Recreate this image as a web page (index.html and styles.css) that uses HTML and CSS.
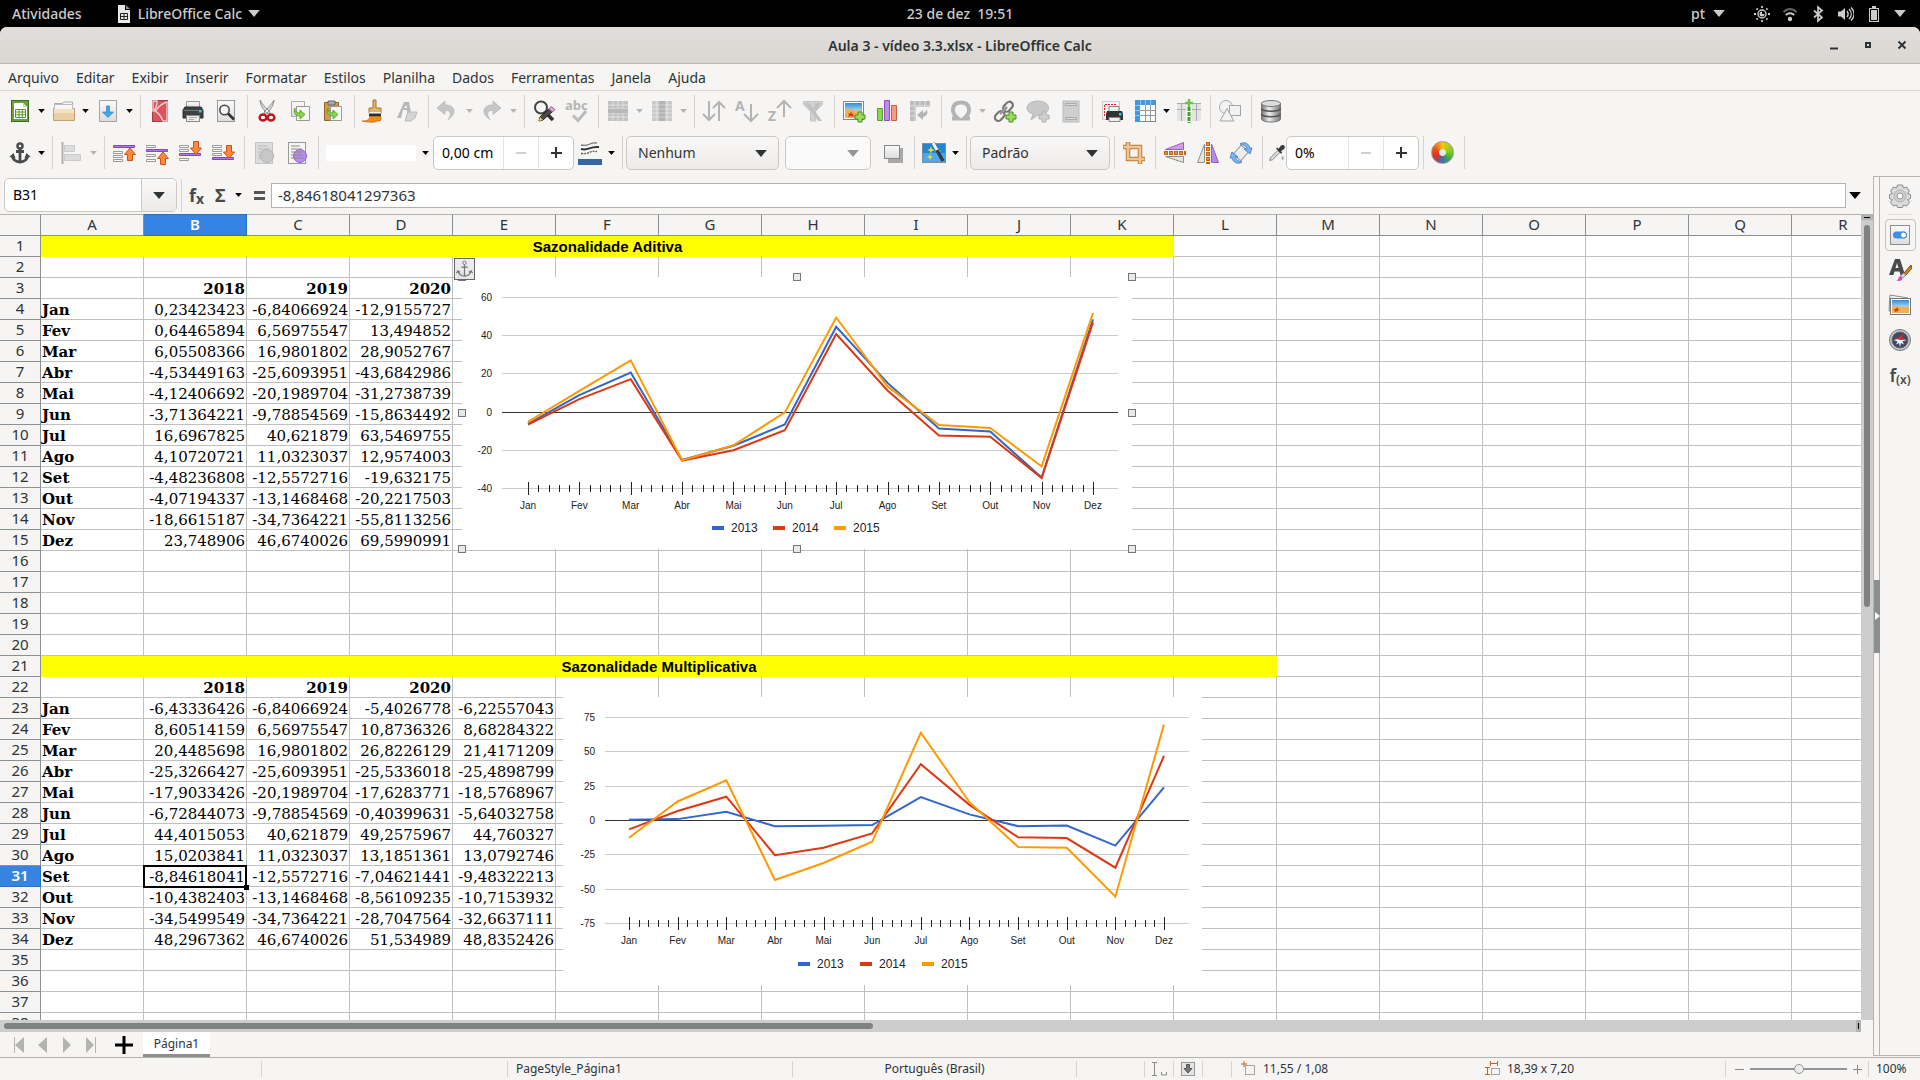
FILE: index.html
```html
<!DOCTYPE html>
<html lang="pt-BR">
<head>
<meta charset="utf-8">
<title>Aula 3 - vídeo 3.3.xlsx - LibreOffice Calc</title>
<link rel="stylesheet" href="styles.css">
</head>
<body>
<svg class="sprite" aria-hidden="true">
  <defs>
    <linearGradient id="paper" x1="0" y1="0" x2="0" y2="1"><stop offset="0" stop-color="#fafafa"/><stop offset="1" stop-color="#dcdcdc"/></linearGradient>
    <linearGradient id="sky" x1="0" y1="0" x2="0" y2="1"><stop offset="0" stop-color="#2f8fd8"/><stop offset="1" stop-color="#b8e2fa"/></linearGradient>
    <linearGradient id="metal" x1="0" y1="0" x2="1" y2="0"><stop offset="0" stop-color="#777"/><stop offset=".4" stop-color="#eee"/><stop offset="1" stop-color="#777"/></linearGradient>
  </defs>
  <symbol id="calc" viewBox="0 0 24 24"><rect x="3.500" y="1.500" width="17" height="21" fill="#6aa13f" stroke="#3d6b1e"/><path d="M6 4h9l4 4v12H6z" fill="#fff"/><path d="M15 4v4h4z" fill="#c9dcb9"/><path d="M7.500 10.500h10v8h-10zM7.500 13h10M7.500 15.800h10M11 10.500v8M14.300 10.500v8" fill="none" stroke="#5b9433"/></symbol>
  <symbol id="folder" viewBox="0 0 24 24"><path d="M2.500 20V4.500H10l2-1.500h8.500v4z" fill="#f4f4f4" stroke="#aaa"/><path d="M1.500 9.500h21v12h-21z" fill="#e9cfa2" stroke="#c2a370"/><path d="M2.500 5.500h18v5h-18z" fill="#f6f6f6" stroke="#bbb"/><path d="M2 10h20v4H2z" fill="#f3e3c5"/></symbol>
  <symbol id="save" viewBox="0 0 24 24"><rect x="3.500" y="1.500" width="17" height="21" fill="url(#paper)" stroke="#a5a5a5"/><path d="M10.500 7h3v6h4L12 18.500 6.500 13h4z" fill="#45a5e8" stroke="#2b82c2" stroke-width=".7"/></symbol>
  <symbol id="pdf" viewBox="0 0 24 24"><rect x="4.500" y="1.500" width="15" height="21" fill="#d9545c" stroke="#9c4048"/><path d="M5 2h4c0 5-1 8-4 10zM19 3c-7 2-9 6-12 9 4 2 6 5 8 10h4z" fill="#d9545c" stroke="#f7c9cb" stroke-width="1.400"/></symbol>
  <symbol id="print" viewBox="0 0 24 24"><path d="M5.500 2.500h13v7h-13z" fill="url(#paper)" stroke="#999"/><path d="M4 8h16l2 3v8H2v-8z" fill="#3e4142" stroke="#2a2c2d"/><path d="M2.500 11.500h19" stroke="#777"/><rect x="18" y="11" width="2.500" height="2.500" fill="#1fd0ff"/><path d="M5.500 16.500h13v6h-13z" fill="#efefef" stroke="#888"/><path d="M8 18.500h8M8 20.500h5" stroke="#aaa"/></symbol>
  <symbol id="preview" viewBox="0 0 24 24"><rect x="3.500" y="1.500" width="17" height="21" fill="url(#paper)" stroke="#999"/><circle cx="10.500" cy="11" r="4.700" fill="#f5f5f5" stroke="#4a4a4a" stroke-width="1.600"/><path d="M14 14.500l6 6" stroke="#333" stroke-width="2.600"/></symbol>
  <symbol id="cut" viewBox="0 0 24 24"><path d="M5 1c0 5 4 11 9 15l1-3C11 9 7 5 5 1zM19 1c0 5-4 11-9 15l-1-3c4-4 8-8 10-12z" fill="#ddd" stroke="#777" stroke-width=".8"/><ellipse cx="8" cy="18.500" rx="3.400" ry="3" fill="none" stroke="#c4151c" stroke-width="2.400"/><ellipse cx="16" cy="18.500" rx="3.400" ry="3" fill="none" stroke="#c4151c" stroke-width="2.400"/></symbol>
  <symbol id="copy" viewBox="0 0 24 24"><path d="M3.500 2.500h13v15h-13z" fill="url(#paper)" stroke="#aaa"/><path d="M8.500 7.500h13v14h-13z" fill="#f8f8f8" stroke="#999"/><path d="M7 9c0 4 2 5 5 5v-3l5 4.500-5 4.500v-3c-5 0-7-4-5-8z" fill="#8ad54a" stroke="#4e9a1c" stroke-width=".8"/></symbol>
  <symbol id="paste" viewBox="0 0 24 24"><path d="M3.500 3.500h14v18h-14z" fill="#d29a4e" stroke="#936424"/><path d="M7 2h7v4H7z" fill="#aaa" stroke="#666"/><path d="M9.500 7.500h11v14h-11z" fill="#f8f8f8" stroke="#999"/><path d="M7 9c0 4 2 5 5 5v-3l5 4.500-5 4.500v-3c-5 0-7-4-5-8z" fill="#8ad54a" stroke="#4e9a1c" stroke-width=".8"/></symbol>
  <symbol id="brush" viewBox="0 0 24 24"><path d="M11 1h3v8h5v5H7V9h4z" fill="#e6b566" stroke="#a87328"/><path d="M7 13.500h12v4H7z" fill="#2d2d2d"/><path d="M7 12.500h12v2H7z" fill="#f4f4f4" stroke="#999" stroke-width=".5"/><path d="M8 17.500h11v3c0 2-3 1-5 2s-7 1-14-.5c5 0 7-1 8-4.500z" fill="#f08c1e" stroke="#bf6407" stroke-width=".7"/></symbol>
  <symbol id="clear" viewBox="0 0 24 24"><path d="M2 19L9 3h5l2 11h-4v-3H8l-2 8zM9 9h3l-.500-3z" fill="#b8b8b8" fill-rule="evenodd"/><path d="M13 13h9l-2 6-4 3h-6z" fill="#d4d4d4" stroke="#bcbcbc"/></symbol>
  <symbol id="undo" viewBox="0 0 24 24"><path d="M9 2L1 9l8 6.500v-4c6-.5 7 4 3 9 9-5 8-15-3-14.500z" fill="#c6c6c6" stroke="#b4b4b4" stroke-width=".7"/></symbol>
  <symbol id="redo" viewBox="0 0 24 24"><path d="M13 2l8 7-8 6.500v-4c-6-.5-7 4-3 9-9-5-8-15 3-14.500z" fill="#c6c6c6" stroke="#b4b4b4" stroke-width=".7"/></symbol>
  <symbol id="find" viewBox="0 0 24 24"><circle cx="9" cy="8.500" r="6" fill="#f5f5f5" stroke="#444" stroke-width="2"/><path d="M13 13l8 8" stroke="#333" stroke-width="3.500"/><path d="M7 22l1-4L18 9l3 3-10 9z" fill="#4a4a4a" stroke="#222"/><path d="M17 10l2-2.500 4 3-2.500 2.500z" fill="#e6a4d8" stroke="#9c6290"/><path d="M7 22l1-4 3 3z" fill="#f2d33a"/></symbol>
  <symbol id="rows" viewBox="0 0 24 24"><rect x="2" y="2" width="20" height="20" fill="#c2c2c2"/><path d="M7 2v20M12 2v20M17 2v20M2 6h20M2 10h20M2 14h20M2 18h20" stroke="#e0e0e0"/><path d="M2 10h20v4H2z" fill="#b8b8b8"/></symbol>
  <symbol id="cols" viewBox="0 0 24 24"><rect x="2" y="2" width="20" height="20" fill="#cacaca"/><path d="M7 2v20M12 2v20M17 2v20M2 6h20M2 10h20M2 14h20M2 18h20" stroke="#e4e4e4"/><path d="M9 2h6v20H9z" fill="#b4b4b4"/><path d="M9 6h6M9 10h6M9 14h6M9 18h6" stroke="#d0d0d0"/></symbol>
  <symbol id="sort" viewBox="0 0 24 24"><path d="M7 2v19M1 15l6 6 6-6M17 22V3M11 9l6-6 6 6" fill="none" stroke="#b4b4b4" stroke-width="2"/></symbol>
  <symbol id="filter" viewBox="0 0 24 24"><path d="M2.500 2.500h19v3l-7 7V22h-5v-9.500l-7-7z" fill="#d2d2d2" stroke="#c4c4c4"/><path d="M4 4h4l13 18h-4zM20 4h-5l-3 5 3 3z" fill="#c0c0c0"/></symbol>
  <symbol id="image" viewBox="0 0 24 24"><rect x="1.500" y="2.500" width="20" height="18" fill="#fff" stroke="#888"/><path d="M3 4h17v9H3z" fill="url(#sky)"/><path d="M3 11c5-3 8 2 17 0v8H3z" fill="#f0b254"/><path d="M6 14l2 1 1-3 1 3 2-1-1 2 1 2-3-1-3 1 1-2z" fill="#e3350d"/><path d="M16 13h4v3h3v4h-3v3h-4v-3h-3v-4h3z" fill="#9bdc5a" stroke="#4a8d22"/></symbol>
  <symbol id="chart" viewBox="0 0 24 24"><path d="M2.500 9.500h5v12h-5z" fill="#8bd655" stroke="#5b9d2f"/><path d="M9.500 1.500h5v20h-5z" fill="#c489ec" stroke="#8c4fb8"/><path d="M16.500 6.500h5v15h-5z" fill="#ef9b85" stroke="#c0614a"/></symbol>
  <symbol id="pivot" viewBox="0 0 24 24"><path d="M2 2h20v6H8v14H2z" fill="#bdbdbd"/><path d="M2 7h20M7 2v20M12 2v6M17 2v6M2 12h6M2 17h6" stroke="#dedede"/><path d="M18 10c3 4 1 7-3 8v3l-6-5 6-5v3c3-1 3-2 3-4z" fill="#b4b4b4"/></symbol>
  <symbol id="omega" viewBox="0 0 24 24"><path d="M3 19.500h6C1 13 3 3.500 12 3.500S23 13 15 19.500h6" fill="none" stroke="#b4b4b4" stroke-width="4"/></symbol>
  <symbol id="link" viewBox="0 0 24 24"><g fill="none" stroke="#777" stroke-width="2.200"><rect x="12" y="2" width="7" height="11" rx="3.500" transform="rotate(42 15 7)"/><rect x="3" y="11" width="7" height="11" rx="3.500" transform="rotate(42 6 17)"/></g><path d="M7 15l7-7" stroke="#999" stroke-width="2.500"/><path d="M16 13h4v3h3v4h-3v3h-4v-3h-3v-4h3z" fill="#9bdc5a" stroke="#4a8d22"/></symbol>
  <symbol id="comment" viewBox="0 0 24 24"><path d="M12 2c14 0 14 14 0 14l-7 5 2-6C-3 12 0 2 12 2z" fill="#c8c8c8" stroke="#b8b8b8"/><path d="M16 13h4v3h3v4h-3v3h-4v-3h-3v-4h3z" fill="#d0d0d0" stroke="#b0b0b0"/></symbol>
  <symbol id="headfoot" viewBox="0 0 24 24"><rect x="4" y="2" width="16" height="21" fill="#cfcfcf" stroke="#bcbcbc"/><path d="M6.500 4.500h11v2h-11zM6.500 18.500h11v2h-11z" fill="#dadada" stroke="#aaa"/></symbol>
  <symbol id="printarea" viewBox="0 0 24 24"><path d="M2.500 2.500h17v18h-17z" fill="#f4f4f4" stroke="#ccc"/><path d="M4.500 17V5.500H17" fill="none" stroke="#e3242b" stroke-dasharray="2 1"/><path d="M9 7.500h10v5H9z" fill="#eee" stroke="#888"/><path d="M7 12h15l1 3v6H6v-6z" fill="#333"/><rect x="19" y="14" width="2.500" height="2.500" fill="#1fd0ff"/><path d="M9 18.500h11v4H9z" fill="#eee" stroke="#888"/></symbol>
  <symbol id="freeze" viewBox="0 0 24 24"><rect x="2.500" y="1.500" width="20" height="21" fill="#fafafa" stroke="#888"/><path d="M12.500 6v16M17.500 6v16M7 11.500h15M7 16.500h15" stroke="#999"/><path d="M2 1h21v5H7v17H2z" fill="#3d9be3"/><path d="M2 6.500h5M2 11.500h5M2 16.500h5M7.500 1v5M12.500 1v5M17.500 1v5" stroke="#8cc8f2"/></symbol>
  <symbol id="split" viewBox="0 0 24 24"><path d="M0 4h9v18H0zM15 4h9v18h-9z" fill="#e4e4e4"/><path d="M0 4.500h9M15 4.500h9M0 10.500h9M15 10.500h9M4.500 5v17M19.500 5v17" stroke="#aaa"/><path d="M12 8v16" stroke="#43a52c" stroke-width="3" stroke-dasharray="4 1"/><path d="M12 0v8M8 4h8" stroke="#6cc644" stroke-width="2.400"/></symbol>
  <symbol id="shapes" viewBox="0 0 24 24"><circle cx="8" cy="8" r="6.500" fill="#f2f2f2" stroke="#a8a8a8"/><rect x="11.500" y="6.500" width="11" height="10" fill="#f2f2f2" stroke="#a4a4a4"/><path d="M9 9.500l7 12.500H2z" fill="#f2f2f2" stroke="#a4a4a4"/></symbol>
  <symbol id="database" viewBox="0 0 24 24"><path d="M2.500 4v16c0 4 19 4 19 0V4z" fill="url(#metal)" stroke="#777"/><ellipse cx="12" cy="4.500" rx="9.500" ry="3" fill="#ddd" stroke="#777"/><path d="M2.500 9.500c1 3.500 18 3.500 19 0M2.500 15c1 3.500 18 3.500 19 0" fill="none" stroke="#555" stroke-width="1.500"/></symbol>
  <symbol id="anchor" viewBox="0 0 24 24"><circle cx="12" cy="5" r="2.500" fill="none" stroke="#4a4a4a" stroke-width="2.500"/><path d="M12 7v14M8 10.500h8M4 14c1 5 4 7 8 7s7-2 8-7" fill="none" stroke="#4a4a4a" stroke-width="2.800"/><path d="M1.500 16l4-4 2 5zM22.500 16l-4-4-2 5z" fill="#4a4a4a"/></symbol>
  <symbol id="align" viewBox="0 0 24 24"><path d="M2.500 1v22" stroke="#b0b0b0" stroke-width="2"/><path d="M4.500 4.500h10v6h-10zM4.500 13.500h16v6h-16z" fill="#dcdcdc" stroke="#cacaca"/></symbol>
  <symbol id="tofront" viewBox="0 0 24 24"><path d="M1.500 10.500h9v2h-9zM1.500 14.500h9v2h-9zM1.500 18.500h9v2h-9z" fill="#fff" stroke="#999"/><path d="M1.500 4.500h21v2h-21z" fill="#b07ae6" stroke="#8347c4"/><path d="M18 7l5.500 6.500h-3v6h-5v-6h-3z" fill="#fb8a3c" stroke="#cf5314"/></symbol>
  <symbol id="forward" viewBox="0 0 24 24"><path d="M1.500 4.500h9v2h-9zM1.500 13.500h9v2h-9zM1.500 18.500h9v2h-9z" fill="#fff" stroke="#999"/><path d="M1.500 8.500h21v2h-21z" fill="#b07ae6" stroke="#8347c4"/><path d="M18 11l5.500 6.500h-3v6h-5v-6h-3z" fill="#fb8a3c" stroke="#cf5314"/></symbol>
  <symbol id="back" viewBox="0 0 24 24"><path d="M1.500 4.500h9v2h-9zM1.500 8.500h9v2h-9zM1.500 17.500h9v2h-9z" fill="#fff" stroke="#999"/><path d="M1.500 12.500h21v2h-21z" fill="#b07ae6" stroke="#8347c4"/><path d="M18 13.500L12.500 7h3V.500h5V7h3z" fill="#fb8a3c" stroke="#cf5314"/></symbol>
  <symbol id="toback" viewBox="0 0 24 24"><path d="M1.500 4.500h9v2h-9zM1.500 8.500h9v2h-9zM1.500 12.500h9v2h-9z" fill="#fff" stroke="#999"/><path d="M1.500 16.500h21v2h-21z" fill="#b07ae6" stroke="#8347c4"/><path d="M18 17.500L12.500 11h3V4.500h5V11h3z" fill="#fb8a3c" stroke="#cf5314"/></symbol>
  <symbol id="fore" viewBox="0 0 24 24"><rect x="3.500" y="1.500" width="17" height="21" fill="#dcdcdc" stroke="#c4c4c4"/><path d="M6 5h9M6 8h11M6 11h11M6 14h4M6 17h3" stroke="#b8b8b8"/><circle cx="15" cy="15" r="6.500" fill="#c8c8c8" stroke="#b4b4b4"/></symbol>
  <symbol id="backg" viewBox="0 0 24 24"><rect x="3.500" y="1.500" width="17" height="21" fill="#f6f6f6" stroke="#999"/><circle cx="15" cy="15" r="6.500" fill="#b98af0" stroke="#9560d8"/><path d="M6 5h9M6 8h11M6 11h11M6 14h12M6 17h13" stroke="#8a8a8a"/></symbol>
  <symbol id="linestyle" viewBox="0 0 24 24"><path d="M3 4c8 2 8-3 16-2" fill="none" stroke="#777" stroke-width="1.300"/><path d="M3 8c8 2 8-3 18-2" fill="none" stroke="#333" stroke-width="2"/><path d="M3 12.500c8 1 8-3 16-2" fill="none" stroke="#555" stroke-width="1.300" stroke-dasharray="2 1"/><path d="M0 18h24v6H0z" fill="#3465a4"/></symbol>
  <symbol id="shadow" viewBox="0 0 24 24"><path d="M7 7h15v15H7z" fill="#a8a8a8"/><rect x="3.500" y="4.500" width="15" height="13" fill="url(#paper)" stroke="#888"/></symbol>
  <symbol id="wand" viewBox="0 0 24 24"><rect x=".500" y="2.500" width="23" height="19" fill="#1f86d8" stroke="#8a8a8a"/><path d="M1 12h22v9H1z" fill="#47a9ee"/><path d="M9 5l1 3 3 1-3 1-1 3-1-3-3-1 3-1zM16 7l1 2 2 1-2 1-1 2-1-2-2-1 2-1zM8 13l1 2 2 1-2 1-1 2-1-2-2-1 2-1z" fill="#f4d13a"/><path d="M11 2l10 18" stroke="#3a3a3a" stroke-width="3.500"/><path d="M11 2l4 7" stroke="#f4f4f4" stroke-width="3"/></symbol>
  <symbol id="crop" viewBox="0 0 24 24"><path d="M6 1v17h17M1 6h17v17" fill="none" stroke="#bb7a32" stroke-width="4.500"/><path d="M6 1.500v16.500h16.500M1.500 6h16.500v16.500" fill="none" stroke="#f0c592" stroke-width="2.600"/></symbol>
  <symbol id="flipv" viewBox="0 0 24 24"><path d="M20.500 1.500v7h-18z" fill="#c9a0f0" stroke="#9060c8"/><path d="M2.500 15.500h18v6z" fill="#e2e6df" stroke="#8c928a"/><path d="M1 12h22" stroke="#d4610a" stroke-width="4" stroke-dasharray="4 1"/><path d="M2 12h20" stroke="#fbb56c" stroke-dasharray="2 3"/></symbol>
  <symbol id="fliph" viewBox="0 0 24 24"><path d="M15.500 3l7 18.500h-7z" fill="#b98aea" stroke="#9060c8"/><path d="M8.500 3v18.500h-7z" fill="#e2e6df" stroke="#8c928a"/><path d="M12 1v22" stroke="#d4610a" stroke-width="4" stroke-dasharray="4 1"/><path d="M12 2v20" stroke="#fbb56c" stroke-dasharray="2 3"/></symbol>
  <symbol id="rotate" viewBox="0 0 24 24"><rect x="7" y="6" width="10" height="12" fill="#eee" stroke="#999" transform="rotate(40 12 12)"/><path d="M11 3c5-3 9 0 10 4h2l-2 6-6-5h3c-1-3-3-4-7-5zM13 21c-5 3-9 0-10-4H1l2-6 6 5H6c1 3 3 4 7 5z" fill="#7db4ee" stroke="#3f78c0" stroke-width=".8"/></symbol>
  <symbol id="dropper" viewBox="0 0 24 24"><path d="M5 18L14 9l2.500 2.500L8 20l-3.500 1z" fill="#ddd" stroke="#777"/><path d="M12 7l1.500-1.500L15 7l3-4c3-2 6 1 4 4l-4 3 1.500 1.500L18 13z" fill="#3b3b3b"/><path d="M20 16c3 5-3 5 0 0z" fill="#bbb" stroke="#999"/></symbol>
  <symbol id="gear" viewBox="0 0 24 24"><path d="M9.500 1h5l1 3 3-1 3 4-2 2.500 3 1v4l-3 1 2 3-3 3.500-3-1-1 2.500h-5l-1-2.500-3 1-3-3.500 2-3-3-1v-4l3-1L2.500 7l3-4 3 1z" fill="#dcdcdc" stroke="#8a8a8a"/><circle cx="12" cy="12" r="6" fill="#cecece" stroke="#b0b0b0"/><circle cx="12" cy="12" r="3" fill="#f6f5f4" stroke="#999"/></symbol>
  <symbol id="props" viewBox="0 0 24 24"><rect x="2.500" y="2.500" width="19" height="19" fill="url(#paper)" stroke="#8e8e8e"/><rect x="5" y="8.500" width="14" height="7" rx="3.500" fill="#3c8fe8"/><circle cx="15.500" cy="12" r="3" fill="#fff" stroke="#4a80b8"/></symbol>
  <symbol id="styles" viewBox="0 0 24 24"><path d="M1 17L7 1h5l5 16h-4.500l-1-3.500h-5L5.500 17zM7.500 10h3L9 5z" fill="#4a4a4a" fill-rule="evenodd"/><path d="M23 7l-7 8 2 2 6-7z" fill="#c98728" stroke="#7a4b0d"/><path d="M15.500 15l-3 3 2 2 3.500-3z" fill="#ddd" stroke="#888"/><path d="M12.500 18c-2 0-2 4-4 5 3 0 6 0 6-3z" fill="#d849c8"/></symbol>
  <symbol id="gallery" viewBox="0 0 24 24"><path d="M2 2l18 3v15L1 18z" fill="#e8f4fb" stroke="#888"/><rect x="2.500" y="5.500" width="20" height="16" fill="#fff" stroke="#777"/><path d="M4 7h17v8H4z" fill="url(#sky)"/><path d="M4 14c5-3 9 2 17-1v7H4z" fill="#eeb052"/><path d="M6 16l2 0 1-2 1 2 2 0-2 1 0 2-1-1-2 1z" fill="#e3350d"/></symbol>
  <symbol id="compass" viewBox="0 0 24 24"><circle cx="12" cy="12" r="10.500" fill="#c9c9c9" stroke="#777"/><circle cx="12" cy="12" r="8" fill="#3d4a66" stroke="#666"/><path d="M12 9l1.500 2 5 1-4 1.500 1.500 3-3-1.500-1 4-1-4-3 1.500 1.500-3-4-1.500 5-1z" fill="#f4f4f4"/><path d="M15.500 5l-1 5 4 1.500-6.500.5-7-2.500 6 .5z" fill="#e2252a"/></symbol>
  <symbol id="down" viewBox="0 0 10 6"><path d="M0 0h10L5 6z" fill="currentColor"/></symbol>
</svg>

<div class="desktop">
  <header class="topbar">
    <div class="topbar-left">
      <button class="top-item" type="button">Atividades</button>
      <button class="top-item app-menu" type="button">
        <svg class="ic16" viewBox="0 0 16 18" aria-hidden="true"><path d="M2 0h7v5h5v13H2z" fill="#e8e8e8"/><path d="M10 0l4 4h-4z" fill="#888"/><path d="M4.500 8.500h7v6h-7zM4.500 11.500h7M8 8.500v6" fill="none" stroke="#222"/></svg>
        LibreOffice Calc
        <svg class="tri" aria-hidden="true"><use href="#down"/></svg>
      </button>
    </div>
    <time class="clock">23 de dez&nbsp; 19:51</time>
    <div class="topbar-right">
      <button class="top-item lang" type="button">pt <svg class="tri" aria-hidden="true"><use href="#down"/></svg></button>
      <button class="top-item tray" type="button" aria-label="Sistema">
        <svg class="ic16" viewBox="0 0 16 16"><circle cx="8" cy="8" r="4" fill="none" stroke="#ccc" stroke-width="1.400"/><path d="M8 5.500a2.500 2.500 0 1 0 2.500 2.500H8z" fill="#ccc"/><path d="M8 0v2M8 14v2M0 8h2M14 8h2M2.500 2.500l1.200 1.200M12.300 12.300l1.200 1.200M2.500 13.500l1.200-1.200M12.300 3.700l1.200-1.200" stroke="#ccc" stroke-width="1.800"/></svg>
        <svg class="ic16" viewBox="0 0 16 16"><path d="M1.500 6c4-4 9-4 13 0" fill="none" stroke="#666" stroke-width="2"/><path d="M3.800 9c3-2.500 5.400-2.500 8.400 0" fill="none" stroke="#ccc" stroke-width="2"/><circle cx="8" cy="13" r="2.200" fill="#ccc"/></svg>
        <svg class="ic16" viewBox="0 0 16 16"><path d="M4 4.500l8 7L8 15V1l4 3.500-8 7" fill="none" stroke="#ccc" stroke-width="1.700"/></svg>
        <svg class="ic16" viewBox="0 0 16 16"><path d="M0 5.500h3L7 2v12l-4-3.500H0z" fill="#ccc"/><path d="M9 5c1.500 2 1.500 4 0 6M11 3c3 3 3 7 0 10M13 1.500c4 4 4 9 0 13" fill="none" stroke="#ccc" stroke-width="1.400"/></svg>
        <svg class="ic16" viewBox="0 0 16 16"><path d="M6 0h4v2h3v14H3V2h3z" fill="#ccc"/><path d="M4.500 3.500h7v11h-7z" fill="none" stroke="#000"/></svg>
        <svg class="tri" aria-hidden="true"><use href="#down"/></svg>
      </button>
    </div>
  </header>

  <main class="window">
    <div class="titlebar">
      <h1>Aula 3 - vídeo 3.3.xlsx - LibreOffice Calc</h1>
      <div class="winbtns">
        <button type="button" aria-label="Minimizar"><svg viewBox="0 0 10 10"><path d="M1 8.500h8" stroke="#2e3436" stroke-width="2"/></svg></button>
        <button type="button" aria-label="Maximizar"><svg viewBox="0 0 10 10"><rect x="3" y="3" width="4" height="4" fill="none" stroke="#2e3436" stroke-width="2"/></svg></button>
        <button type="button" aria-label="Fechar"><svg viewBox="0 0 10 10"><path d="M1.500 1.500l7 7M8.500 1.500l-7 7" stroke="#2e3436" stroke-width="2"/></svg></button>
      </div>
    </div>
    <nav class="menubar">
      <button type="button">Arquivo</button><button type="button">Editar</button><button type="button">Exibir</button><button type="button">Inserir</button><button type="button">Formatar</button><button type="button">Estilos</button><button type="button">Planilha</button><button type="button">Dados</button><button type="button">Ferramentas</button><button type="button">Janela</button><button type="button">Ajuda</button>
    </nav>

    <div class="toolbar standard">
      <button class="tb split" type="button" aria-label="Novo"><svg><use href="#calc"/></svg><svg class="arr"><use href="#down"/></svg></button>
      <button class="tb split" type="button" aria-label="Abrir"><svg><use href="#folder"/></svg><svg class="arr"><use href="#down"/></svg></button>
      <button class="tb split" type="button" aria-label="Salvar"><svg><use href="#save"/></svg><svg class="arr"><use href="#down"/></svg></button>
      <span class="sep"></span>
      <button class="tb" type="button" aria-label="Exportar como PDF"><svg><use href="#pdf"/></svg></button>
      <button class="tb" type="button" aria-label="Imprimir"><svg><use href="#print"/></svg></button>
      <button class="tb" type="button" aria-label="Visualizar impressão"><svg><use href="#preview"/></svg></button>
      <span class="sep"></span>
      <button class="tb" type="button" aria-label="Cortar"><svg><use href="#cut"/></svg></button>
      <button class="tb" type="button" aria-label="Copiar"><svg><use href="#copy"/></svg></button>
      <button class="tb" type="button" aria-label="Colar"><svg><use href="#paste"/></svg></button>
      <span class="sep"></span>
      <button class="tb" type="button" aria-label="Clonar formatação"><svg><use href="#brush"/></svg></button>
      <button class="tb" type="button" aria-label="Limpar formatação"><svg><use href="#clear"/></svg></button>
      <span class="sep"></span>
      <button class="tb split off" type="button" aria-label="Desfazer"><svg><use href="#undo"/></svg><svg class="arr"><use href="#down"/></svg></button>
      <button class="tb split off" type="button" aria-label="Refazer"><svg><use href="#redo"/></svg><svg class="arr"><use href="#down"/></svg></button>
      <span class="sep"></span>
      <button class="tb" type="button" aria-label="Localizar e substituir"><svg><use href="#find"/></svg></button>
      <button class="tb" type="button" aria-label="Ortografia"><svg class="lettered" viewBox="0 0 24 24"><text class="abc" x="0" y="11">abc</text><path d="M8 16.500l5 5L21 12" fill="none" stroke="#bbb" stroke-width="3"/></svg></button>
      <span class="sep"></span>
      <button class="tb split off" type="button" aria-label="Linha"><svg><use href="#rows"/></svg><svg class="arr"><use href="#down"/></svg></button>
      <button class="tb split off" type="button" aria-label="Coluna"><svg><use href="#cols"/></svg><svg class="arr"><use href="#down"/></svg></button>
      <span class="sep"></span>
      <button class="tb" type="button" aria-label="Classificar"><svg><use href="#sort"/></svg></button>
      <button class="tb" type="button" aria-label="Ordem crescente"><svg class="lettered" viewBox="0 0 24 24"><text x="0" y="12">A</text><path d="M16 5v17M9 15l7 7 7-7" fill="none" stroke="#b4b4b4" stroke-width="2"/></svg></button>
      <button class="tb" type="button" aria-label="Ordem decrescente"><svg class="lettered" viewBox="0 0 24 24"><text x="0" y="22">Z</text><path d="M16 18V2M9 9l7-7 7 7" fill="none" stroke="#b4b4b4" stroke-width="2"/></svg></button>
      <button class="tb" type="button" aria-label="Autofiltro"><svg><use href="#filter"/></svg></button>
      <span class="sep"></span>
      <button class="tb" type="button" aria-label="Inserir imagem"><svg><use href="#image"/></svg></button>
      <button class="tb" type="button" aria-label="Inserir gráfico"><svg><use href="#chart"/></svg></button>
      <button class="tb" type="button" aria-label="Tabela dinâmica"><svg><use href="#pivot"/></svg></button>
      <span class="sep"></span>
      <button class="tb split off" type="button" aria-label="Caractere especial"><svg><use href="#omega"/></svg><svg class="arr"><use href="#down"/></svg></button>
      <button class="tb" type="button" aria-label="Hiperlink"><svg><use href="#link"/></svg></button>
      <button class="tb" type="button" aria-label="Anotação"><svg><use href="#comment"/></svg></button>
      <button class="tb" type="button" aria-label="Cabeçalhos e rodapés"><svg><use href="#headfoot"/></svg></button>
      <span class="sep"></span>
      <button class="tb" type="button" aria-label="Intervalo de impressão"><svg><use href="#printarea"/></svg></button>
      <button class="tb split" type="button" aria-label="Congelar"><svg><use href="#freeze"/></svg><svg class="arr"><use href="#down"/></svg></button>
      <button class="tb" type="button" aria-label="Dividir janela"><svg><use href="#split"/></svg></button>
      <span class="sep"></span>
      <button class="tb" type="button" aria-label="Funções de desenho"><svg><use href="#shapes"/></svg></button>
      <span class="sep"></span>
      <button class="tb" type="button" aria-label="Fontes de dados"><svg><use href="#database"/></svg></button>
    </div>

    <div class="toolbar object">
      <button class="tb split" type="button" aria-label="Âncora"><svg><use href="#anchor"/></svg><svg class="arr"><use href="#down"/></svg></button>
      <span class="sep"></span>
      <button class="tb split off" type="button" aria-label="Alinhar"><svg><use href="#align"/></svg><svg class="arr"><use href="#down"/></svg></button>
      <span class="sep"></span>
      <button class="tb" type="button" aria-label="Trazer para a frente"><svg><use href="#tofront"/></svg></button>
      <button class="tb" type="button" aria-label="Avançar um"><svg><use href="#forward"/></svg></button>
      <button class="tb" type="button" aria-label="Recuar um"><svg><use href="#back"/></svg></button>
      <button class="tb" type="button" aria-label="Enviar para trás"><svg><use href="#toback"/></svg></button>
      <span class="sep"></span>
      <button class="tb" type="button" aria-label="Para o primeiro plano"><svg><use href="#fore"/></svg></button>
      <button class="tb" type="button" aria-label="Para o plano de fundo"><svg><use href="#backg"/></svg></button>
      <span class="sep"></span>
      <button class="linebox" type="button" aria-label="Estilo de linha"><span></span><svg class="arr"><use href="#down"/></svg></button>
      <div class="spin wide"><input aria-label="Largura da linha" value="0,00 cm"><button class="minus" type="button" aria-label="Diminuir"></button><button class="plus" type="button" aria-label="Aumentar"></button></div>
      <button class="tb split" type="button" aria-label="Cor da linha"><svg><use href="#linestyle"/></svg><svg class="arr"><use href="#down"/></svg></button>
      <span class="sep"></span>
      <span class="combo fill"><select aria-label="Preenchimento"><option>Nenhum</option></select><svg><use href="#down"/></svg></span>
      <span class="combo empty"><select aria-label="Cor de preenchimento" disabled><option></option></select><svg><use href="#down"/></svg></span>
      <button class="tb" type="button" aria-label="Sombra"><svg><use href="#shadow"/></svg></button>
      <span class="sep"></span>
      <button class="tb split" type="button" aria-label="Filtro"><svg><use href="#wand"/></svg><svg class="arr"><use href="#down"/></svg></button>
      <span class="sep"></span>
      <span class="combo mode"><select aria-label="Modo da imagem"><option>Padrão</option></select><svg><use href="#down"/></svg></span>
      <span class="sep"></span>
      <button class="tb" type="button" aria-label="Cortar imagem"><svg><use href="#crop"/></svg></button>
      <span class="sep"></span>
      <button class="tb" type="button" aria-label="Inverter na vertical"><svg><use href="#flipv"/></svg></button>
      <button class="tb" type="button" aria-label="Inverter na horizontal"><svg><use href="#fliph"/></svg></button>
      <button class="tb" type="button" aria-label="Girar"><svg><use href="#rotate"/></svg></button>
      <span class="sep"></span>
      <svg class="dropper" aria-hidden="true"><use href="#dropper"/></svg>
      <div class="spin"><input aria-label="Transparência" value="0%"><button class="minus" type="button" aria-label="Diminuir"></button><button class="plus" type="button" aria-label="Aumentar"></button></div>
      <span class="sep"></span>
      <button class="tb" type="button" aria-label="Cor"><span class="wheel"></span></button>
      <span class="sep"></span>
    </div>

    <div class="workarea">
      <section class="document">
        <div class="formulabar">
          <div class="namebox"><input aria-label="Caixa de nome" value="B31"><button type="button" aria-label="Lista de nomes"><svg><use href="#down"/></svg></button></div>
          <span class="sep"></span>
          <button class="fx" type="button" aria-label="Assistente de funções">f<sub>x</sub></button>
          <button class="sigma" type="button" aria-label="Soma">Σ <svg class="arr"><use href="#down"/></svg></button>
          <button class="equals" type="button" aria-label="Fórmula"></button>
          <input class="formula" aria-label="Linha de entrada" value="-8,84618041297363">
          <button class="expand" type="button" aria-label="Expandir"><svg><use href="#down"/></svg></button>
        </div>
        <div class="gridrow">
          <div class="sheet">
            <table class="cells"><thead></thead><tbody></tbody></table>
            <div class="cursor"><i></i></div>
            <figure class="plot additive" data-plot="additive"></figure>
            <figure class="plot multiplicative" data-plot="multiplicative"></figure>
            <div class="handles"><i></i><i></i><i></i><i></i><b></b><i></i><i></i><i></i><i></i></div>
            <div class="anchor-badge"><svg viewBox="0 0 20 20"><circle cx="10" cy="3.500" r="1.800" fill="none" stroke="#777"/><path d="M10 5.500v12M6.500 8h7M3 12c1 4 4 5.500 7 5.500s6-1.500 7-5.500M1.500 14.500L3 12l2.500 1.500M18.500 14.500L17 12l-2.500 1.500" fill="none" stroke="#777" stroke-width="1.300"/></svg></div>
          </div>
          <div class="vscroll"><span class="grip"></span><span class="thumb"></span></div>
        </div>
        <div class="hscroll"><span class="thumb"></span><span class="grip"></span></div>
        <div class="tabs">
          <button type="button" aria-label="Primeira"><svg viewBox="0 0 12 16"><path d="M1.500 0v16" stroke="#b3b3b1"/><path d="M11 0v16L2 8z" fill="#b3b3b1"/></svg></button>
          <button type="button" aria-label="Anterior"><svg viewBox="0 0 12 16"><path d="M10 0v16L1 8z" fill="#b3b3b1"/></svg></button>
          <button type="button" aria-label="Próxima"><svg viewBox="0 0 12 16"><path d="M2 0v16l8-8z" fill="#b3b3b1"/></svg></button>
          <button type="button" aria-label="Última"><svg viewBox="0 0 12 16"><path d="M10.500 0v16" stroke="#b3b3b1"/><path d="M1 0v16l8-8z" fill="#b3b3b1"/></svg></button>
          <button class="addtab" type="button" aria-label="Adicionar planilha"><svg viewBox="0 0 18 18"><path d="M9 0v18M0 9h18" stroke="#000" stroke-width="3"/></svg></button>
          <button class="tab" type="button">Página1</button>
        </div>
      </section>
      <aside class="sidebar">
        <div class="splitter"><button type="button" aria-label="Ocultar painel"></button></div>
        <div class="deck">
          <button type="button" aria-label="Configurações"><svg><use href="#gear"/></svg></button>
          <button class="on" type="button" aria-label="Propriedades"><svg><use href="#props"/></svg></button>
          <button type="button" aria-label="Estilos"><svg><use href="#styles"/></svg></button>
          <button type="button" aria-label="Galeria"><svg><use href="#gallery"/></svg></button>
          <button type="button" aria-label="Navegador"><svg><use href="#compass"/></svg></button>
          <button class="func" type="button" aria-label="Funções">f<sub>(x)</sub></button>
        </div>
      </aside>
    </div>

    <footer class="status">
      <span></span><span></span><span class="pg">PageStyle_Página1</span><span class="mid">Português (Brasil)</span><span></span>
      <span class="mid"><svg viewBox="0 0 16 16"><path d="M1 1.500h5M1 14.500h5M3.500 1.500v13M10.500 11v3h5v-3" fill="none" stroke="#8a8a8a"/></svg></span>
      <span class="mid"><svg class="modified" viewBox="0 0 14 14"><rect x=".500" y=".500" width="13" height="13" fill="#e4e4e4" stroke="#999"/><path d="M5.500 2.500h3v4h2.500L7 11 3 6.500h2.500z" fill="#777" stroke="#555"/></svg></span>
      <span></span>
      <span class="pos"><svg viewBox="0 0 16 16"><path d="M3 0v6M0 3h6" stroke="#d4610a"/><path d="M4.500 4.500h9v9h-9z" fill="none" stroke="#555" stroke-dasharray="1 1"/></svg>11,55 / 1,08</span>
      <span class="size"><svg viewBox="0 0 16 16"><path d="M5 2.500h8M5.500 0v5M12.500 0v5M2.500 6v8M0 6.500h5M0 13.500h5" stroke="#d4610a"/><path d="M6.500 7.500h8v6h-8z" fill="none" stroke="#555" stroke-dasharray="1 1"/></svg>18,39 x 7,20</span>
      <span class="zoom"><i class="zminus"></i><input type="range" aria-label="Zoom" min="0" max="100" value="50"><i class="zplus"></i></span>
      <span class="pct">100%</span>
    </footer>
  </main>
</div>
<script src="sheet.js"></script>
</body>
</html>
```
FILE: styles.css
```css
* { box-sizing: border-box; }
body { margin: 0; background: #000; color: #2e3436; font: 14px/20px "Noto Sans", "Open Sans", sans-serif; overflow: hidden; }
button, input, select { font: inherit; color: inherit; margin: 0; padding: 0; border: 0; background: none; border-radius: 0; }
button { white-space: nowrap; }
.sprite { position: absolute; width: 0; height: 0; }
.desktop { height: 100vh; display: flex; flex-direction: column; }

/* shell bar */
.topbar { height: 27px; flex: none; display: grid; grid-template-columns: 1fr auto 1fr; align-items: center; color: #ccc; font-weight: 500; }
.topbar-left, .topbar-right, .top-item { display: flex; align-items: center; }
.topbar-left { padding-left: 12px; gap: 34px; }
.app-menu { gap: 6px; }
.topbar-right { justify-content: flex-end; padding-right: 14px; gap: 29px; }
.lang { gap: 8px; }
.tray { gap: 12px; }
.ic16 { width: 16px; height: 18px; display: block; }
.tri { width: 12px; height: 7px; display: block; }

/* window */
.window { flex: 1; min-height: 0; display: flex; flex-direction: column; background: #f6f5f4; border-radius: 7px 7px 0 0; }
.titlebar { height: 37px; flex: none; display: grid; grid-template-columns: 1fr auto 1fr; align-items: center; background: linear-gradient(#e1dedb, #dad6d2); border-bottom: 1px solid #bfb8b1; border-radius: 7px 7px 0 0; }
.titlebar h1 { grid-column: 2; margin: 0; padding-top: 1px; font-size: 14px; line-height: 20px; font-weight: 600; }
.winbtns { display: flex; justify-content: flex-end; gap: 10px; padding-right: 6px; }
.winbtns button { width: 24px; height: 24px; display: grid; place-items: center; }
.winbtns svg { width: 10px; height: 10px; }
.menubar { height: 27px; flex: none; display: flex; align-items: center; gap: 1px; padding-top: 2px; border-bottom: 1px solid #d9d7d5; }
.menubar button { padding: 0 8px; }

/* toolbars */
.toolbar { flex: none; display: flex; align-items: center; padding-left: 4px; }
.standard { height: 40px; }
.object { height: 43px; }
.tb { width: 33px; height: 32px; flex: none; display: flex; align-items: center; padding-left: 4px; }
.tb svg { width: 24px; height: 24px; flex: none; }
.lettered { overflow: visible; }
.lettered text { font-size: 14px; font-weight: 700; fill: #b4b4b4; }
.lettered .abc { font-size: 13px; }
.split { width: 44px; gap: 6px; }
.tb .arr, .arr { width: 7px; height: 4px; flex: none; color: #000; }
.off .arr { color: #b4b4b4; }
.sep { width: 8px; height: 33px; flex: none; background: linear-gradient(#d5d3d1, #d5d3d1) center / 1px 100% no-repeat; }
.linebox { width: 111px; flex: none; display: flex; align-items: center; justify-content: space-between; padding: 0 4px; }
.linebox span { width: 90px; height: 16px; background: #fff; }
.spin { width: 133px; height: 34px; flex: none; display: flex; background: #fff; border: 1px solid #cdc7c2; border-radius: 5px; color: #000; }
.spin.wide { width: 141px; }
.spin input { flex: 1; min-width: 0; padding-left: 8px; }
.spin button { width: 35px; border-left: 1px solid #e6e4e2; }
.spin .minus { background: linear-gradient(#d0d0ce, #d0d0ce) center / 10px 2px no-repeat; }
.spin .plus { background: linear-gradient(#2e3436, #2e3436) center / 11px 2px no-repeat, linear-gradient(#2e3436, #2e3436) center / 2px 11px no-repeat; }
.combo { position: relative; height: 34px; flex: none; border: 1px solid #cdc7c2; border-radius: 5px; background: linear-gradient(#f9f8f8, #edebe9); }
.combo select { width: 100%; height: 100%; appearance: none; padding-left: 11px; opacity: 1; }
.combo svg { position: absolute; right: 11px; top: 13px; width: 12px; height: 7px; pointer-events: none; }
.fill { width: 153px; }
.empty { width: 86px; margin: 0 6px; background: #fbfafa; color: #929595; }
.mode { width: 140px; }
.dropper { width: 20px; height: 20px; flex: none; }
.wheel { width: 23px; height: 23px; border-radius: 50%; border: 1px solid #999; background: radial-gradient(#e8e8e8 0 3px, transparent 4px), conic-gradient(#f6c515, #7bd51c 80deg, #3fae3a 130deg, #3f6db8 180deg, #d8332a 240deg, #f04a18 290deg, #f6c515); }

/* document */
.workarea { flex: 1; min-height: 0; display: flex; }
.document { flex: 1; min-width: 0; display: flex; flex-direction: column; }
.formulabar { height: 40px; flex: none; display: flex; align-items: center; padding: 2px 0 0 4px; }
.namebox { width: 173px; height: 34px; flex: none; display: flex; border: 1px solid #cdc7c2; border-radius: 5px; background: #fff; color: #000; overflow: hidden; }
.namebox input { flex: 1; min-width: 0; padding-left: 8px; }
.namebox button { width: 35px; border-left: 1px solid #cdc7c2; background: linear-gradient(#f9f8f8, #edebe9); color: #2e3436; }
.namebox svg, .expand svg { width: 12px; height: 7px; display: block; margin: auto; }
.fx, .sigma, .equals { height: 24px; line-height: 24px; font-weight: 700; font-size: 18px; color: #4a4a4a; flex: none; }
.fx { width: 26px; margin-left: 4px; text-align: left; }
.fx sub, .func sub { font-size: 14px; line-height: 0; vertical-align: -2px; }
.sigma { width: 36px; display: flex; align-items: center; gap: 10px; }
.equals { width: 20px; background: linear-gradient(#555, #555) 3px 8px / 11px 3px no-repeat, linear-gradient(#555, #555) 3px 14px / 11px 3px no-repeat; }
.formula { flex: 1; min-width: 0; height: 25px; padding-left: 6px; background: #fff; border: 1px solid #b3b3b0; font-size: 15px; }
.expand { width: 27px; flex: none; color: #000; padding-right: 9px; }

/* spreadsheet */
.gridrow { flex: 1; min-height: 0; display: flex; }
.sheet { position: relative; flex: 1; min-width: 0; overflow: hidden; background: #fff; }
.cells { table-layout: fixed; border-collapse: separate; border-spacing: 0; }
.cells th, .cells td { height: 21px; padding: 2px 2px 0; line-height: 18px; white-space: nowrap; overflow: hidden; border: 0 solid #c0c0c0; border-width: 0 1px 1px 0; }
.cells th { padding: 0; background: #f6f5f4; border-color: #8b9191; font-weight: 400; font-size: 15px; text-align: center; vertical-align: top; }
.cells thead th { height: 22px; width: 103px; border-top: 1px solid #b3b3b0; }
.cells thead th:first-child { width: 41px; }
.cells .active { background: #3584e4; color: #fff; font-weight: 600; border-color: #2a6fc0; }
.cells td { padding-right: 1px; font-family: "DejaVu Serif", serif; font-size: 15px; color: #000; text-align: right; }
.cells td.label, .cells td.year { font-weight: 700; }
.cells td.label { text-align: left; padding-left: 1px; }
.cells td.banner { background: #ff0; border-color: #ff0; text-align: center; font: 700 15px/18px "Liberation Sans", Arial, sans-serif; }
.cursor { position: absolute; left: 143px; top: 651px; width: 104px; height: 23px; border: 2px solid #000; }
.cursor i { position: absolute; right: -4px; bottom: -4px; width: 5px; height: 5px; background: #000; }
.plot { position: absolute; margin: 0; background: #fff; }
.plot svg { display: block; }
.plot text { font-family: "Liberation Sans", Arial, sans-serif; font-size: 10px; fill: #222; }
.plot .legend { font-size: 12px; }
.additive { left: 462px; top: 63px; }
.multiplicative { left: 563px; top: 483px; }
.handles { position: absolute; left: 458px; top: 59px; width: 678px; height: 280px; display: grid; grid-template-columns: auto auto auto; justify-content: space-between; align-content: space-between; }
.handles i, .handles b { width: 8px; height: 8px; }
.handles i { border: 1px solid #777; background: #e8e8e8; }
.anchor-badge { position: absolute; left: 454px; top: 44px; width: 21px; height: 22px; border: 1px solid #666; background: #e8e8e8e0; }
.anchor-badge svg { display: block; width: 19px; height: 20px; }

.vscroll { width: 12px; flex: none; background: #cdcdcd; }
.vscroll .grip { display: block; height: 6px; margin-bottom: 5px; background: linear-gradient(#000, #000) center / 6px 1px no-repeat #b2b2b0; }
.vscroll .thumb { display: block; width: 6px; height: 47.4%; margin: 0 3px; border-radius: 3px; background: #7f8282; }
.hscroll { height: 12px; flex: none; margin-right: 12px; display: flex; align-items: center; justify-content: space-between; background: #cdcdcd; padding-left: 4px; }
.hscroll .thumb { width: 46.8%; height: 6px; border-radius: 3px; background: #7f8282; }
.hscroll .grip { width: 5px; height: 12px; background: linear-gradient(#000, #000) center / 1px 6px no-repeat #b2b2b0; }
.tabs { height: 25px; flex: none; display: flex; align-items: center; padding-left: 7px; }
.tabs button { width: 24px; height: 24px; display: grid; place-items: center; }
.tabs svg { width: 12px; height: 16px; }
.tabs .addtab { width: 40px; padding-left: 2px; }
.tabs .addtab svg { width: 18px; height: 18px; }
.tabs .tab { width: 67px; height: 25px; padding-top: 2px; background: #fff; border-bottom: 3px solid #8b8f8e; font-size: 12px; line-height: 20px; }

.sidebar { width: 47px; flex: none; margin: 2px 0 1px; display: flex; border: 1px solid #b4b4b1; border-right: 0; }
.splitter { width: 6px; flex: none; border-right: 1px solid #b4b4b1; display: flex; align-items: center; }
.splitter button { width: 6px; height: 73px; flex: none; background: #8b8f8e; display: grid; place-items: center; }
.splitter button::after { content: ""; border: 4px solid transparent; border-left: 5px solid #fff; border-right: 0; }
.deck { flex: 1; display: flex; flex-direction: column; align-items: center; gap: 3px; }
.deck button { width: 31px; height: 32px; display: grid; place-items: center; }
.deck svg { width: 24px; height: 24px; }
.deck button:first-child { width: 24px; height: 38px; margin-bottom: 1px; border-bottom: 1px solid #dedcda; }
.deck .on { border: 1px solid #c6c3c0; border-radius: 4px; }
.deck .func { display: block; font-size: 18px; font-weight: 600; color: #4a4a4a; }
.deck .func sub { font-size: 12px; }

/* status */
.status { height: 23px; flex: none; display: grid; grid-template-columns: 262px 246px 285px 284px 68px 29px 29px 29px 244px minmax(0, 1fr) 143px 51px; align-items: center; border-top: 1px solid #b3b3b0; font-size: 12px; }
.status > span { height: 16px; display: flex; align-items: center; border-right: 1px solid #d5d3d1; white-space: nowrap; }
.status svg { width: 16px; height: 16px; }
.status .modified { width: 14px; height: 14px; }
.status .mid { justify-content: center; }
.status .pg { padding-left: 8px; }
.status .pos, .status .size { gap: 6px; padding-left: 9px; }
.status .pos, .status .pct { border-right: 0; }
.status .pct { padding-left: 7px; }
.status .zoom { gap: 6px; justify-content: center; padding-left: 3px; }
.zminus, .zplus { width: 9px; height: 9px; background: linear-gradient(#888, #888) center / 9px 1px no-repeat; }
.zplus { background: linear-gradient(#888, #888) center / 9px 1px no-repeat, linear-gradient(#888, #888) center / 1px 9px no-repeat; }
.zoom input { appearance: none; width: 97px; height: 10px; background: linear-gradient(#929595, #929595) center / 100% 2px no-repeat; }
.zoom input::-webkit-slider-thumb { appearance: none; width: 10px; height: 10px; border: 1px solid #929595; border-radius: 50%; background: #eee; }
```
FILE: sheet.js
```js
const months = ["Jan", "Fev", "Mar", "Abr", "Mai", "Jun", "Jul", "Ago", "Set", "Out", "Nov", "Dez"];

const additive = [
  ["0,23423423", "-6,84066924", "-12,9155727"],
  ["0,64465894", "6,56975547", "13,494852"],
  ["6,05508366", "16,9801802", "28,9052767"],
  ["-4,53449163", "-25,6093951", "-43,6842986"],
  ["-4,12406692", "-20,1989704", "-31,2738739"],
  ["-3,71364221", "-9,78854569", "-15,8634492"],
  ["16,6967825", "40,621879", "63,5469755"],
  ["4,10720721", "11,0323037", "12,9574003"],
  ["-4,48236808", "-12,5572716", "-19,632175"],
  ["-4,07194337", "-13,1468468", "-20,2217503"],
  ["-18,6615187", "-34,7364221", "-55,8113256"],
  ["23,748906", "46,6740026", "69,5990991"]
];

const multiplicative = [
  ["-6,43336426", "-6,84066924", "-5,4026778", "-6,22557043"],
  ["8,60514159", "6,56975547", "10,8736326", "8,68284322"],
  ["20,4485698", "16,9801802", "26,8226129", "21,4171209"],
  ["-25,3266427", "-25,6093951", "-25,5336018", "-25,4898799"],
  ["-17,9033426", "-20,1989704", "-17,6283771", "-18,5768967"],
  ["-6,72844073", "-9,78854569", "-0,40399631", "-5,64032758"],
  ["44,4015053", "40,621879", "49,2575967", "44,760327"],
  ["15,0203841", "11,0323037", "13,1851361", "13,0792746"],
  ["-8,84618041", "-12,5572716", "-7,04621441", "-9,48322213"],
  ["-10,4382403", "-13,1468468", "-8,56109235", "-10,7153932"],
  ["-34,5499549", "-34,7364221", "-28,7047564", "-32,6637111"],
  ["48,2967362", "46,6740026", "51,534989", "48,8352426"]
];

const HEADER_WIDTH = 41;
const COLUMN_WIDTH = 103;
const ROW_HEIGHT = 21;
const LAST_DATA_COLUMN = 12;
const LAST_DATA_ROW = 34;

const banners = {
  1: { span: 11, text: "Sazonalidade Aditiva" },
  21: { span: 12, text: "Sazonalidade Multiplicativa" }
};

function rowCells(row) {
  if (row === 3 || row === 22) return ["", "2018", "2019", "2020"];
  if (row >= 4 && row <= 15) return [months[row - 4], ...additive[row - 4]];
  if (row >= 23 && row <= 34) return [months[row - 23], ...multiplicative[row - 23]];
  return [];
}

// Only as many rows and columns as the view can show are built.
function buildTable() {
  const sheet = document.querySelector(".sheet");
  const table = document.querySelector(".cells");
  const columns = Math.min(26, Math.max(LAST_DATA_COLUMN, Math.ceil((sheet.clientWidth - HEADER_WIDTH) / COLUMN_WIDTH)));
  const rows = Math.max(LAST_DATA_ROW, Math.ceil((sheet.clientHeight - ROW_HEIGHT - 1) / ROW_HEIGHT));
  table.style.width = `${HEADER_WIDTH + columns * COLUMN_WIDTH}px`;

  let head = "<tr><th></th>";
  for (let c = 0; c < columns; c++) {
    head += `<th scope="col"${c === 1 ? ' class="active"' : ""}>${String.fromCharCode(65 + c)}</th>`;
  }
  table.tHead.innerHTML = head + "</tr>";

  let body = "";
  for (let r = 1; r <= rows; r++) {
    body += `<tr><th scope="row"${r === 31 ? ' class="active"' : ""}>${r}</th>`;
    const banner = banners[r];
    let c = 0;
    if (banner) {
      body += `<td class="banner" colspan="${banner.span}">${banner.text}</td>`;
      c = banner.span;
    }
    const cells = rowCells(r);
    for (; c < columns; c++) {
      const kind = cells[c] ? (c === 0 ? "label" : r === 3 || r === 22 ? "year" : "") : "";
      body += `<td${kind ? ` class="${kind}"` : ""}>${cells[c] || ""}</td>`;
    }
    body += "</tr>";
  }
  table.tBodies[0].innerHTML = body;
}

const colors = ["#3366cc", "#dc3912", "#ff9900"];
const plots = {
  additive: {
    data: multiplicative, width: 670, height: 272, left: 40, right: 656,
    levels: [60, 40, 20, 0, -20, -40], top: 20, bottom: 211, first: 66, last: 631,
    legendX: 250, legendStep: 61, legendY: 249
  },
  multiplicative: {
    data: additive, width: 639, height: 288, left: 42, right: 626,
    levels: [75, 50, 25, 0, -25, -50, -75], top: 20, bottom: 226, first: 66, last: 601,
    legendX: 235, legendStep: 62, legendY: 265
  }
};

function buildPlot(figure) {
  const p = plots[figure.dataset.plot];
  const max = p.levels[0];
  const min = p.levels[p.levels.length - 1];
  const y = v => p.top + (max - v) / (max - min) * (p.bottom - p.top);
  const x = i => p.first + i * (p.last - p.first) / 11;
  let out = "";

  for (const v of p.levels) {
    const ly = Math.round(y(v)) + 0.5;
    out += `<path d="M${p.left} ${ly}H${p.right}" stroke="${v === 0 ? "#333" : "#ccc"}"/>`;
    out += `<text x="${p.left - 10}" y="${Math.round(y(v)) + 4}" text-anchor="end">${v}</text>`;
  }
  for (let t = 0; t <= 55; t++) {
    const tx = Math.round(x(t / 5)) + 0.5;
    const h = t % 5 ? 3 : 6;
    out += `<path d="M${tx} ${p.bottom - h}V${p.bottom + h + 1}" stroke="#222"/>`;
  }
  months.forEach((m, i) => {
    out += `<text x="${x(i)}" y="${p.bottom + 21}" text-anchor="middle">${m}</text>`;
  });
  colors.forEach((color, s) => {
    const pts = p.data.map((row, i) => `${x(i)},${y(parseFloat(row[s].replace(",", ".")))}`);
    out += `<polyline points="${pts.join(" ")}" fill="none" stroke="${color}" stroke-width="2"/>`;
    const lx = p.legendX + s * p.legendStep;
    out += `<rect x="${lx}" y="${p.legendY}" width="12" height="4" fill="${color}"/>`;
    out += `<text class="legend" x="${lx + 19}" y="${p.legendY + 6}">${2013 + s}</text>`;
  });
  figure.innerHTML = `<svg width="${p.width}" height="${p.height}">${out}</svg>`;
}

buildTable();
window.addEventListener("resize", buildTable);
document.querySelectorAll(".plot").forEach(buildPlot);
```
